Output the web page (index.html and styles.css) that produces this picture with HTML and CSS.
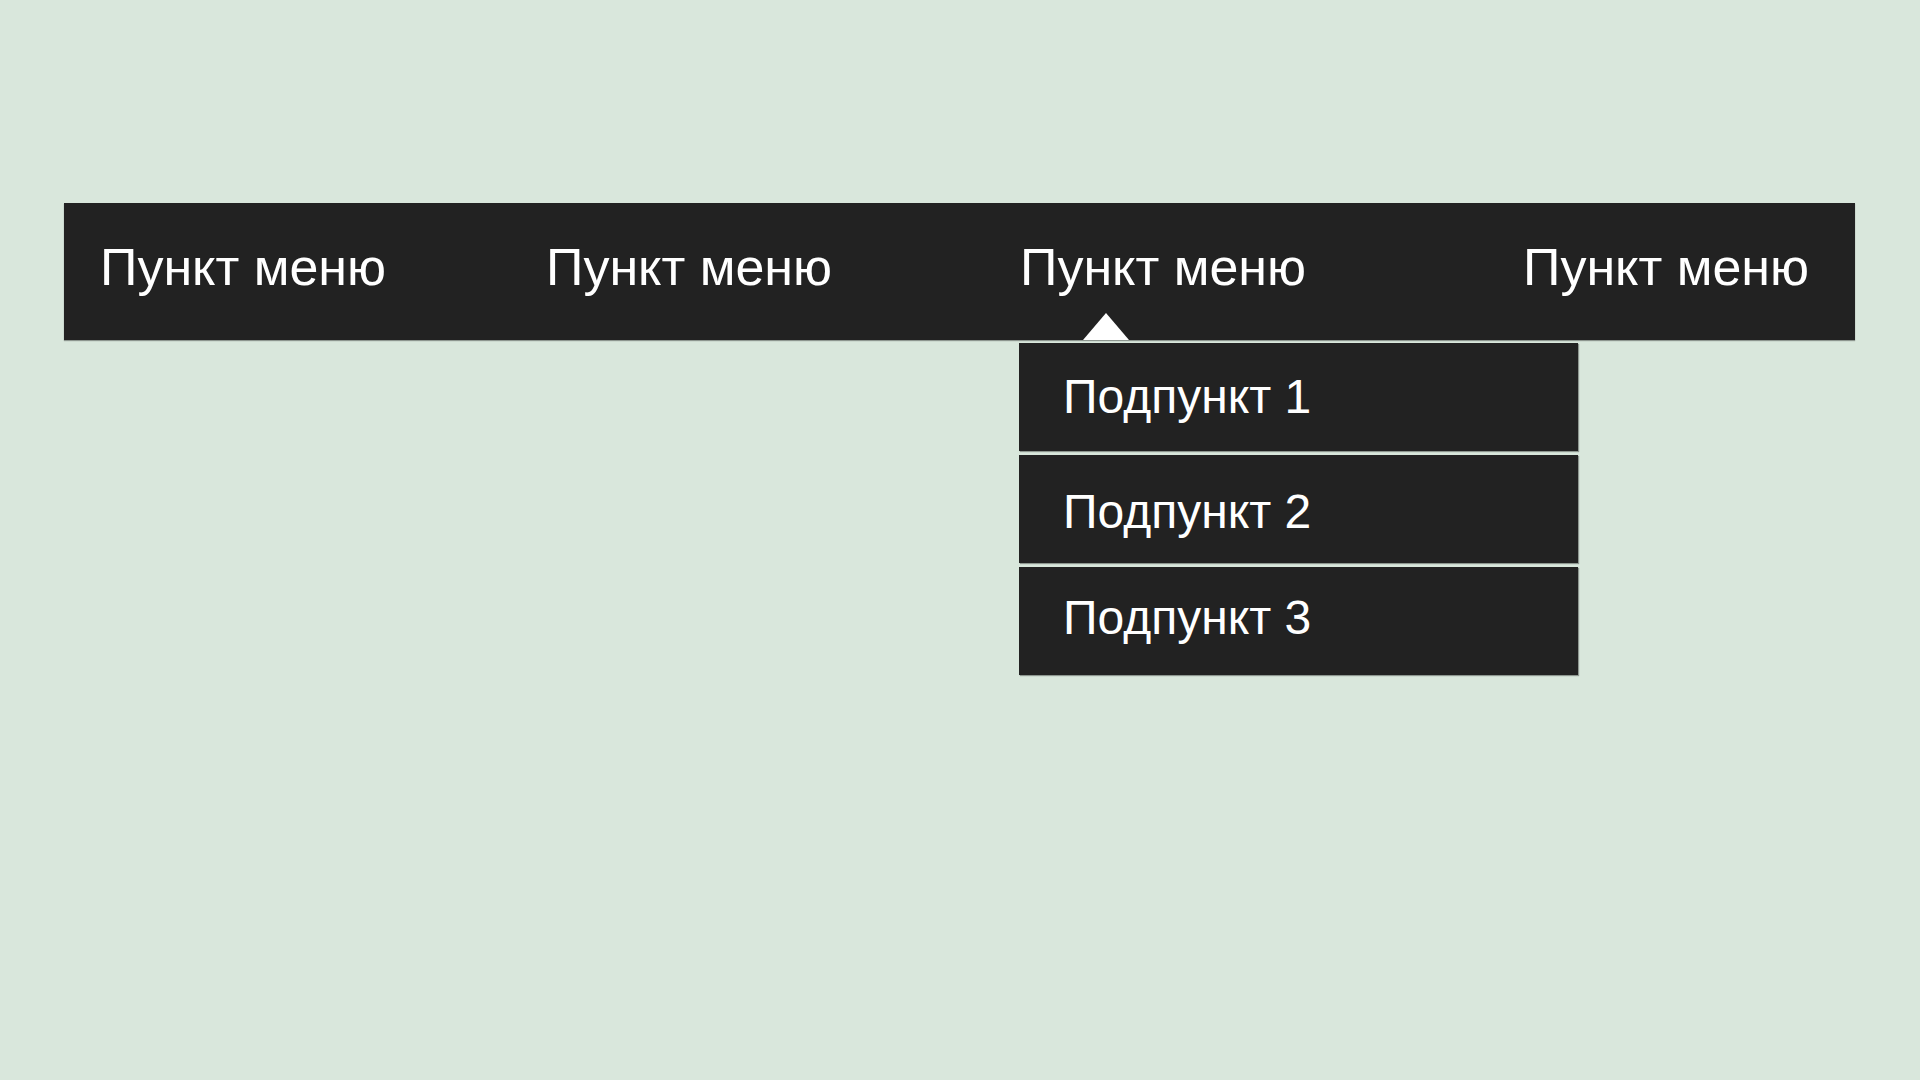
FILE: index.html
```html
<!DOCTYPE html>
<html lang="ru">
<head>
<meta charset="utf-8">
<title>Меню</title>
<link rel="stylesheet" href="styles.css">
</head>
<body>
<nav class="menu">
  <ul class="menu-list">
    <li class="menu-item"><a href="#">Пункт меню</a></li>
    <li class="menu-item"><a href="#">Пункт меню</a></li>
    <li class="menu-item menu-item--open">
      <a href="#">Пункт меню</a>
      <span class="caret"></span>
      <ul class="submenu">
        <li class="submenu-item"><a href="#">Подпункт 1</a></li>
        <li class="submenu-item submenu-item--low"><a href="#">Подпункт 2</a></li>
        <li class="submenu-item submenu-item--high"><a href="#">Подпункт 3</a></li>
      </ul>
    </li>
    <li class="menu-item"><a href="#">Пункт меню</a></li>
  </ul>
</nav>
</body>
</html>
```
FILE: styles.css
```css
html, body {
  margin: 0;
  padding: 0;
}
body {
  background: #d9e7dc;
  font-family: "Liberation Sans", Arial, sans-serif;
  width: 1920px;
  height: 1080px;
  overflow: hidden;
}
ul {
  list-style: none;
  margin: 0;
  padding: 0;
}
a {
  color: #ffffff;
  text-decoration: none;
}
.menu {
  margin: 203px 65px 0 64px;
  height: 137px;
  background: #222222;
  box-shadow: 0 1px 1px rgba(0, 0, 0, 0.35);
}
.menu-list {
  display: grid;
  grid-template-columns: 446px 474px 503px 1fr;
  padding: 33px 0 0 36px;
}
.menu-item {
  position: relative;
  font-size: 52px;
  line-height: 62px;
}
.caret {
  position: absolute;
  left: 63px;
  top: 77px;
  width: 0;
  height: 0;
  border-left: 23px solid transparent;
  border-right: 23px solid transparent;
  border-bottom: 27px solid #ffffff;
}
.submenu {
  position: absolute;
  left: -1px;
  top: 107px;
  width: 559px;
  display: flex;
  flex-direction: column;
  gap: 4px;
}
.submenu-item {
  background: #222222;
  height: 108px;
  box-sizing: border-box;
  line-height: 108px;
  font-size: 48px;
  padding-left: 44px;
  box-shadow: 1px 1px 1px rgba(0, 0, 0, 0.35);
}
.submenu-item--low {
  padding-top: 5px;
  line-height: 103px;
}
.submenu-item--high {
  line-height: 101px;
}
```
